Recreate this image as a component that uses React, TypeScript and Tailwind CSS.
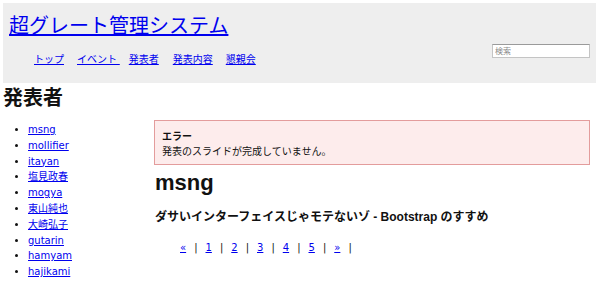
import React from "react";

const font = { fontFamily: '"Liberation Sans", "Noto Sans CJK JP", sans-serif' };
const smallFont = { fontFamily: '"DejaVu Sans", "Noto Sans CJK JP", sans-serif' };

const speakers = [
  "msng",
  "mollifier",
  "itayan",
  "塩見政春",
  "mogya",
  "東山純也",
  "大崎弘子",
  "gutarin",
  "hamyam",
  "hajikami",
];

export default function App() {
  const link = "text-[#0000ee] underline";
  return (
    <div className="w-[600px] h-[281px] overflow-hidden bg-white text-[#111]" style={font}>
      <header className="mx-[3px] mt-[3px] w-[593px] h-[80px] bg-[#eeeeee] flex justify-between">
        <div className="pl-[6px]">
          <h1 className="pt-[11px] text-[20px] leading-[24px] font-normal">
            <a href="#" className={link}>超グレート管理システム</a>
          </h1>
          <nav className="mt-[15px] flex text-[10px] leading-[14px] pl-[25px]">
            <a href="#" className={link}>トップ</a>
            <a href="#" className={`${link} ml-[13px]`}>イベント{"\u00a0"}</a>
            <a href="#" className={`${link} ml-[9px]`}>発表者</a>
            <a href="#" className={`${link} ml-[14px]`}>発表内容</a>
            <a href="#" className={`${link} ml-[13px]`}>懇親会</a>
          </nav>
        </div>
        <input
          type="text"
          placeholder="検索"
          className="mt-[41px] mr-[6px] w-[98px] h-[14px] bg-white border border-[#c4c4c4] border-t-[#9a9a9a] px-[2px] text-[8px] leading-[12px] placeholder:text-[#8a8a8a] outline-none"
          style={font}
        />
      </header>
      <h1 className="mt-[3px] pl-[3px] text-[20px] leading-[24px] font-bold">発表者</h1>
      <div className="flex items-start">
        <aside className="w-[154px] shrink-0 pt-[12px]">
          <ul className="list-disc pl-[28px] text-[10px] leading-[15.8px]" style={smallFont}>
            {speakers.map((s) => (
              <li key={s}>
                <a href="#" className={link}>{s}</a>
              </li>
            ))}
          </ul>
        </aside>
        <main className="w-[436px] pt-[10px]">
          <div className="border border-[#e39c9c] bg-[#fdecec] pl-[7px] pt-[8px] pb-[5px] text-[10px] leading-[15px]">
            <div className="font-bold">エラー</div>
            <div>発表のスライドが完成していません。</div>
          </div>
          <h2 className="mt-[5px] pl-[1px] text-[22px] leading-[26px] font-bold">msng</h2>
          <h3 className="mt-[13px] pl-[1px] text-[12px] leading-[16px] font-bold">
            ダサいインターフェイスじゃモテないゾ - Bootstrap のすすめ
          </h3>
          <div
            className="mt-[16px] pl-[26px] flex gap-[8px] text-[10px] leading-[14px]"
            style={smallFont}
          >
            <a href="#" className={link}>«</a>
            <span>|</span>
            <a href="#" className={link}>1</a>
            <span>|</span>
            <a href="#" className={link}>2</a>
            <span>|</span>
            <a href="#" className={link}>3</a>
            <span>|</span>
            <a href="#" className={link}>4</a>
            <span>|</span>
            <a href="#" className={link}>5</a>
            <span>|</span>
            <a href="#" className={link}>»</a>
            <span>|</span>
          </div>
        </main>
      </div>
    </div>
  );
}
